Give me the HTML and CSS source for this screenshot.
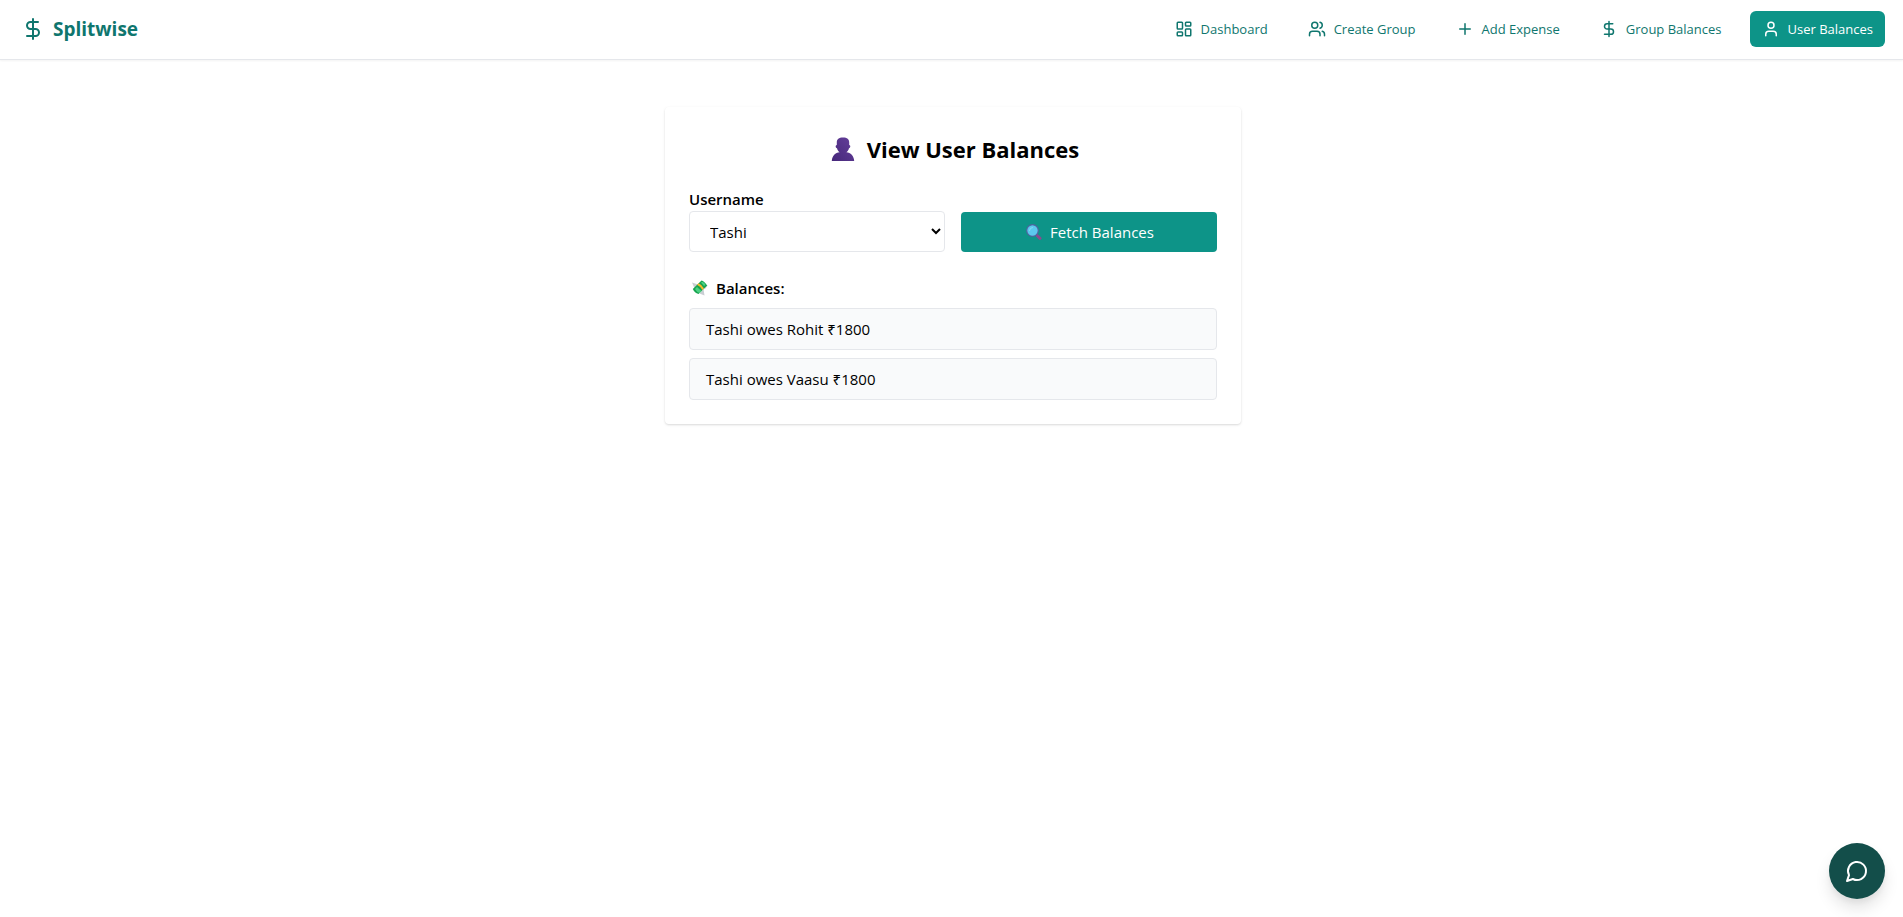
FILE: index.html
```html
<!DOCTYPE html>
<html lang="en">
<head>
<meta charset="utf-8">
<meta name="viewport" content="width=device-width, initial-scale=1">
<title>Splitwise</title>
<link rel="stylesheet" href="styles.css">
</head>
<body>
<header class="header">
  <a class="brand" href="#">
    <svg class="brand-icon line-icon" viewBox="0 0 24 24"><path d="M12 2v20M17 5H9.500a3.500 3.500 0 0 0 0 7h5a3.500 3.500 0 0 1 0 7H6"/></svg>
    <span>Splitwise</span>
  </a>
  <nav class="nav">
    <a class="nav-link" href="#">
      <svg class="nav-icon line-icon" viewBox="0 0 24 24"><rect x="3" y="3" width="7" height="9" rx="1"/><rect x="14" y="3" width="7" height="5" rx="1"/><rect x="14" y="12" width="7" height="9" rx="1"/><rect x="3" y="16" width="7" height="5" rx="1"/></svg>
      <span>Dashboard</span>
    </a>
    <a class="nav-link" href="#">
      <svg class="nav-icon line-icon" viewBox="0 0 24 24"><path d="M16 21v-2a4 4 0 0 0-4-4H6a4 4 0 0 0-4 4v2"/><circle cx="9" cy="7" r="4"/><path d="M22 21v-2a4 4 0 0 0-3-3.870M16 3.130a4 4 0 0 1 0 7.750"/></svg>
      <span>Create Group</span>
    </a>
    <a class="nav-link" href="#">
      <svg class="nav-icon line-icon" viewBox="0 0 24 24"><path d="M5 12h14M12 5v14"/></svg>
      <span>Add Expense</span>
    </a>
    <a class="nav-link" href="#">
      <svg class="nav-icon line-icon" viewBox="0 0 24 24"><path d="M12 2v20M17 5H9.500a3.500 3.500 0 0 0 0 7h5a3.500 3.500 0 0 1 0 7H6"/></svg>
      <span>Group Balances</span>
    </a>
    <a class="nav-link nav-link-active" href="#" aria-current="page">
      <svg class="nav-icon line-icon" viewBox="0 0 24 24"><path d="M19 21v-2a4 4 0 0 0-4-4H9a4 4 0 0 0-4 4v2"/><circle cx="12" cy="7" r="4"/></svg>
      <span>User Balances</span>
    </a>
  </nav>
</header>

<main class="main">
  <section class="card">
    <h1 class="title">
      <svg class="title-icon" viewBox="0 0 24 24"><defs><linearGradient id="bust" x1="0" y1="1" x2="1" y2="0"><stop offset="0" stop-color="#46287a"/><stop offset="1" stop-color="#653f9b"/></linearGradient></defs><path fill="url(#bust)" d="M12 .5C7.800.5 5.800 2 5.800 5.500V8C4.300 8 4.300 11 6 11.200c.4 1.700 1.300 3 2.600 4C4.300 15.700 1.200 18.500.8 24h22.400c-.4-5.500-3.500-8.300-7.800-8.800 1.300-1 2.200-2.300 2.600-4 1.700-.2 1.700-3.200.2-3.200V5.500C18.200 2 16.200.5 12 .5z"/></svg>
      <span>View User Balances</span>
    </h1>
    <form class="form">
      <div class="field">
        <label class="label" for="username">Username</label>
        <select class="select" id="username"><option>Tashi</option></select>
      </div>
      <button class="fetch" type="button">
        <svg class="small-icon" viewBox="0 0 16 16"><path d="M10.500 11l3.500 3.300" stroke="#8a4b8f" stroke-width="3" stroke-linecap="round"/><circle cx="6.500" cy="6.500" r="5.800" fill="#5cc8ee" stroke="#51629f" stroke-width="1.200"/><path d="M3.500 6.500a3 3 0 0 1 3-3" fill="none" stroke="#8adcf7" stroke-linecap="round"/></svg>
        <span>Fetch Balances</span>
      </button>
    </form>
    <h2 class="subtitle">
      <svg class="small-icon" viewBox="0 0 16 16"><path fill="#c9ced3" d="M0 2.500l6 2-3 5zM16 5l-5 3 2 1zM12.500 15.500l-5-2 4-4.500z"/><path fill="#16a34f" d="M.8 9L9.500.5Q12 .8 15.200 5.500L6.500 14Q2.500 13 .8 9z"/><path fill="#4bd082" d="M3 9l2-2 4.500 4-2 2Q4.500 12 3 9zM9 2.500l1.500-.8Q13 3 13.500 5L12 6z"/><path fill="#f5b82e" d="M5 4.800L6.600 3.200Q10.500 5 12 8.500L10.400 10Q8.500 6.500 5 4.800z"/></svg>
      <span>Balances:</span>
    </h2>
    <ul class="balances">
      <li class="balance">Tashi owes Rohit ₹1800</li>
      <li class="balance">Tashi owes Vaasu ₹1800</li>
    </ul>
  </section>
</main>

<button class="chat" type="button" aria-label="Open chat">
  <svg class="chat-icon line-icon" viewBox="0 0 24 24"><path d="M7.900 20A9 9 0 1 0 4 16.100L2 22Z"/></svg>
</button>
</body>
</html>
```
FILE: styles.css
```css
*, *::before, *::after {
  box-sizing: border-box;
}

body {
  margin: 0;
  background: #fff;
  color: #000;
  font-family: "Segoe UI", "Open Sans", "Noto Sans", sans-serif;
  font-size: 15px;
  line-height: 24px;
}

.line-icon {
  flex: none;
  fill: none;
  stroke: currentColor;
  stroke-width: 2;
  stroke-linecap: round;
  stroke-linejoin: round;
}

.header {
  display: flex;
  align-items: center;
  justify-content: space-between;
  padding: 11px 18px 12px 21px;
  border-bottom: 1px solid #e5e7eb;
  box-shadow: 0 1px 2px rgba(0, 0, 0, 0.05);
}

.brand {
  display: flex;
  align-items: center;
  gap: 8px;
  color: #0f766e;
  font-size: 19px;
  font-weight: 700;
  text-decoration: none;
}

.brand-icon {
  width: 24px;
  height: 24px;
}

.nav {
  display: flex;
  gap: 16px;
}

.nav-link {
  display: flex;
  align-items: center;
  gap: 8px;
  padding: 6px 12px;
  border-radius: 6px;
  color: #0f766e;
  font-size: 13px;
  text-decoration: none;
}

.nav-link-active {
  background: #0d9488;
  color: #fff;
}

.nav-icon {
  width: 18px;
  height: 18px;
}

.main {
  padding: 47px 21px 24px 24px;
}

.card {
  max-width: 576px;
  margin: 0 auto;
  padding: 24px;
  border-radius: 4px;
  box-shadow: 0 1px 3px rgba(0, 0, 0, 0.1), 0 1px 2px rgba(0, 0, 0, 0.06);
}

.title {
  display: flex;
  align-items: center;
  justify-content: center;
  gap: 12px;
  margin: 0 0 22px;
  padding: 2px 0 0 4px;
  font-size: 22px;
  font-weight: 700;
  line-height: 32px;
}

.title-icon {
  width: 24px;
  height: 24px;
}

.form {
  display: grid;
  grid-template-columns: 1fr 1fr;
  align-items: end;
  gap: 16px;
  margin-bottom: 24px;
}

.field {
  display: flex;
  flex-direction: column;
}

.label {
  font-weight: 600;
}

.select {
  height: 41px;
  padding: 0 16px;
  border: 1px solid #e5e7eb;
  border-radius: 4px;
  background: #fff;
  color: #000;
  font: inherit;
}

.fetch {
  display: flex;
  align-items: center;
  justify-content: center;
  gap: 8px;
  height: 40px;
  padding: 0 16px 0 18px;
  border: 0;
  border-radius: 4px;
  background: #0d9488;
  color: #fff;
  font: inherit;
}

.small-icon {
  flex: none;
  width: 16px;
  height: 16px;
}

.subtitle {
  display: flex;
  align-items: center;
  gap: 8px;
  margin: 0 0 8px;
  padding-left: 3px;
  font-size: 15px;
  font-weight: 600;
}

.balances {
  display: grid;
  gap: 8px;
  margin: 0;
  padding: 0;
  list-style: none;
}

.balance {
  padding: 8px 16px;
  border: 1px solid #e5e7eb;
  border-radius: 4px;
  background: #f9fafb;
}

.chat {
  position: fixed;
  right: 18px;
  bottom: 18px;
  display: grid;
  place-items: center;
  width: 56px;
  height: 56px;
  padding: 0;
  border: 0;
  border-radius: 50%;
  background: #134e4a;
  color: #fff;
  box-shadow: 0 10px 15px rgba(0, 0, 0, 0.1), 0 4px 6px rgba(0, 0, 0, 0.05);
}

.chat-icon {
  width: 24px;
  height: 24px;
}
```
